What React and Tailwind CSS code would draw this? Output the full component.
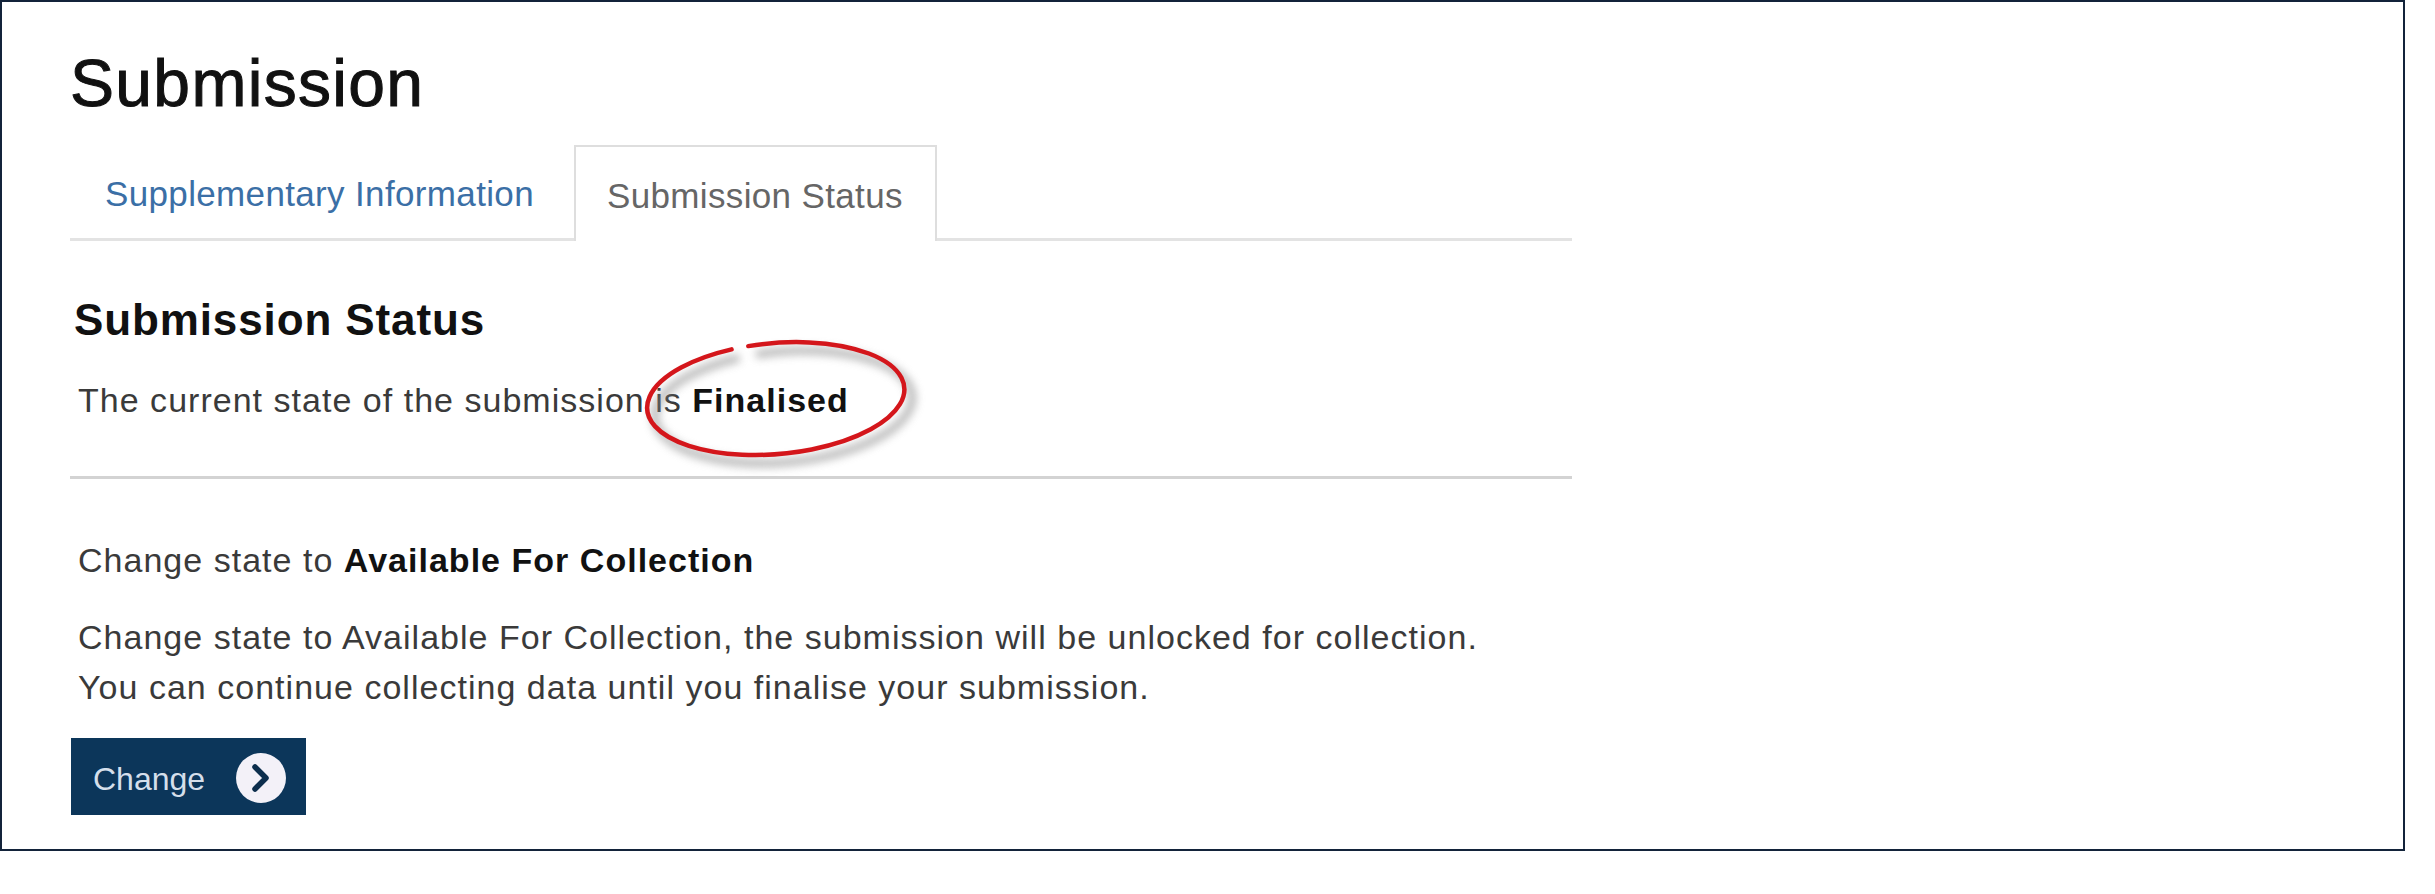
import React from "react"

const font = { fontFamily: '"Liberation Sans", Arial, Helvetica, sans-serif' }

function Ellipse() {
  // hand drawn red loop round the state, with a soft shadow
  const cx = 144
  const cy = 67.5
  const a = 129
  const b = 55.5
  const x1 = cx - 23
  const y1 = cy - b * 0.984
  const x2 = cx - 40
  const y2 = cy - b * 0.951
  const d = `M ${x1} ${y1} A ${a} ${b} 0 1 1 ${x2} ${y2}`
  return (
    <svg
      className="absolute left-[-60px] top-[-50px] pointer-events-none"
      width="320"
      height="170"
      viewBox="0 0 320 170"
    >
      <defs>
        <filter id="shadowBlur" x="-20%" y="-20%" width="140%" height="140%">
          <feGaussianBlur stdDeviation="4" />
        </filter>
      </defs>
      <g transform={`rotate(-5 ${cx} ${cy})`}>
        <path
          d={d}
          transform="translate(7 9)"
          fill="none"
          stroke="#8a8a8a"
          strokeWidth="8"
          opacity="0.6"
          filter="url(#shadowBlur)"
        />
        <path d={d} fill="none" stroke="#d4161b" strokeWidth="4.5" strokeLinecap="round" />
      </g>
    </svg>
  )
}

function Tabs() {
  return (
    <div className="mt-[29px] flex gap-[5px] border-b-[3px] border-[#e3e3e3] h-[96px]">
      <div className="px-[35px] pt-[4px] flex items-center text-[35px] leading-[40px] tracking-[0.01em] text-[#3b6fa6]">
        Supplementary Information
      </div>
      <div className="pl-[31px] pr-[32px] pt-[4px] flex items-center text-[35px] leading-[40px] tracking-[0.01em] text-[#666] bg-white border-2 border-b-0 border-[#dedede] -mb-[3px] h-[96px]">
        Submission Status
      </div>
    </div>
  )
}

function ChangeButton() {
  return (
    <button className="mt-[26px] ml-[1px] h-[77px] w-[235px] bg-[#0c365a] flex items-center pl-[22px] pr-[20px] justify-between">
      <span className="text-[32px] leading-[40px] text-[#d5dfeb] pt-[4px]">Change</span>
      <span className="w-[50px] h-[50px] rounded-full bg-[#f3f1f8] flex items-center justify-center mt-[3px]">
        <svg width="50" height="50" viewBox="0 0 50 50">
          <polyline
            points="19,14 30,25 19,36"
            fill="none"
            stroke="#0c2e4d"
            strokeWidth="5.5"
            strokeLinecap="round"
            strokeLinejoin="round"
          />
        </svg>
      </span>
    </button>
  )
}

export default function App() {
  return (
    <div className="w-[2435px] h-[894px] bg-white" style={font}>
      <div className="w-[2405px] h-[851px] border-2 border-[#13233a] pt-[48px] pl-[68px]">
        <div className="w-[1502px] flex flex-col">
          <h1 className="text-[66px] leading-[66px] tracking-[0.02em] text-[#111] font-normal [-webkit-text-stroke:1px_#111]">
            Submission
          </h1>

          <Tabs />

          {/* Status panel */}
          <h2 className="mt-[57px] ml-[4px] text-[44px] leading-[44px] font-bold tracking-[0.02em] text-[#111]">
            Submission Status
          </h2>
          <p className="mt-[38px] ml-[8px] text-[34px] leading-[40px] tracking-[0.03em] text-[#3a3a3a]">
            The current state of the submission is{" "}
            <span className="relative font-bold text-[#111]">
              Finalised
              <Ellipse />
            </span>
          </p>

          <div className="mt-[56px] h-[3px] bg-[#d3d3d3]" />

          <p className="mt-[61px] ml-[8px] text-[34px] leading-[40px] tracking-[0.03em] text-[#3a3a3a]">
            Change state to <span className="font-bold text-[#111]">Available For Collection</span>
          </p>
          <p className="mt-[32px] ml-[8px] text-[34px] leading-[50px] tracking-[0.03em] text-[#3a3a3a]">
            Change state to Available For Collection, the submission will be unlocked for collection.
            <br />
            You can continue collecting data until you finalise your submission.
          </p>

          <div>
            <ChangeButton />
          </div>
        </div>
      </div>
    </div>
  )
}
